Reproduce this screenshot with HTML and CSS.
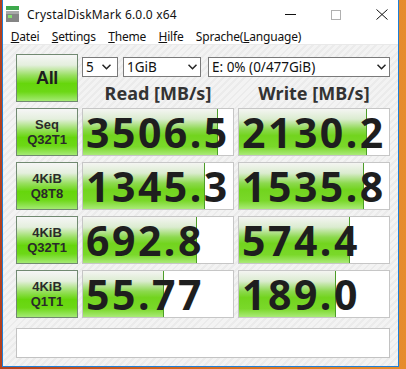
FILE: index.html
```html
<!DOCTYPE html>
<html lang="de">
<head>
  <meta charset="UTF-8">
  <title>CrystalDiskMark 6.0.0 x64</title>
  <link rel="stylesheet" href="styles.css">
</head>
<body>
  <div class="window">
    <div class="titlebar">
      <svg class="app-icon" width="13" height="16" viewBox="0 0 13 16">
        <rect x="0" y="0" width="13" height="4" fill="#3da94c"/>
        <rect x="0" y="5" width="13" height="11" fill="#858585"/>
        <rect x="0" y="5" width="13" height="3" fill="#a9a9a9"/>
        <rect x="2" y="9" width="4" height="3" fill="#86e06e"/>
      </svg>
      <span class="title">CrystalDiskMark 6.0.0 x64</span>
      <div class="controls">
        <svg width="11" height="10" viewBox="0 0 11 10"><line x1="0" y1="4.5" x2="11" y2="4.5" stroke="#111"/></svg>
        <svg width="10" height="10" viewBox="0 0 10 10"><rect x="0.5" y="0.5" width="9" height="9" fill="none" stroke="#b0b0b0"/></svg>
        <svg width="12" height="11" viewBox="0 0 12 11"><path d="M0.5 0.5 L11.5 10.5 M11.5 0.5 L0.5 10.5" stroke="#111" fill="none"/></svg>
      </div>
    </div>

    <div class="menubar">
      <span><u>D</u>atei</span>
      <span><u>S</u>ettings</span>
      <span><u>T</u>heme</span>
      <span><u>H</u>ilfe</span>
      <span>Sprache(<u>L</u>anguage)</span>
    </div>

    <div class="content">
      <div class="grid">
        <div class="btn btn-all">All</div>
        <div class="top">
          <div class="selects">
            <div class="sel sel-n"><span>5</span>
              <svg width="9" height="6" viewBox="0 0 9 6"><polyline points="0.5,0.8 4.5,4.8 8.5,0.8" fill="none" stroke="#222" stroke-width="1.5"/></svg>
            </div>
            <div class="sel sel-s"><span>1GiB</span>
              <svg width="9" height="6" viewBox="0 0 9 6"><polyline points="0.5,0.8 4.5,4.8 8.5,0.8" fill="none" stroke="#222" stroke-width="1.5"/></svg>
            </div>
            <div class="sel sel-d"><span>E: 0% (0/477GiB)</span>
              <svg width="9" height="6" viewBox="0 0 9 6"><polyline points="0.5,0.8 4.5,4.8 8.5,0.8" fill="none" stroke="#222" stroke-width="1.5"/></svg>
            </div>
          </div>
          <div class="heads">
            <div>Read [MB/s]</div>
            <div>Write [MB/s]</div>
          </div>
        </div>

        <div class="btn"><span>Seq</span><span>Q32T1</span></div>
        <div class="val" style="--w:135px">3506.5</div>
        <div class="val" style="--w:128px">2130.2</div>

        <div class="btn"><span>4KiB</span><span>Q8T8</span></div>
        <div class="val" style="--w:122px">1345.3</div>
        <div class="val" style="--w:125px">1535.8</div>

        <div class="btn"><span>4KiB</span><span>Q32T1</span></div>
        <div class="val" style="--w:114px">692.8</div>
        <div class="val" style="--w:111px">574.4</div>

        <div class="btn"><span>4KiB</span><span>Q1T1</span></div>
        <div class="val" style="--w:81px">55.77</div>
        <div class="val" style="--w:97px">189.0</div>
      </div>
      <div class="comment"></div>
    </div>
  </div>
</body>
</html>
```

FILE: styles.css
```css
body {
  margin: 0;
  height: 369px;
  overflow: hidden;
  background: linear-gradient(to right, #b2401e, #d2661f 40%, #e68c2c);
  font-family: 'Noto Sans', sans-serif;
  color: #111;
}
.window {
  box-sizing: border-box;
  margin-left: 2px;
  width: 397px;
  height: 367px;
  border: 1px solid #1f7fd6;
  border-top: none;
  background: #fff;
  display: flex;
  flex-direction: column;
  overflow: hidden;
}
.titlebar {
  height: 29px;
  display: flex;
  align-items: center;
  padding-left: 3px;
}
.app-icon {
  margin-top: -2px;
}
.title {
  margin-left: 8px;
  font-size: 12px;
  letter-spacing: 0.2px;
}
.controls {
  margin-left: auto;
  padding-right: 10px;
  display: flex;
  align-items: center;
  gap: 35px;
}
.menubar {
  height: 15px;
  line-height: 15px;
  font-size: 12px;
  letter-spacing: -0.2px;
  display: flex;
  padding-left: 1.5px;
  border-bottom: 1px solid #e9e9e9;
}
.menubar span {
  padding: 0 6.2px;
}
.menubar u {
  text-underline-offset: 1px;
}
.content {
  flex: 1;
  padding: 9px 0 0 13px;
  background: repeating-linear-gradient(135deg, #f3f3f3 0 3px, #ebebeb 3px 5px);
}
.grid {
  display: grid;
  grid-template-columns: 62px 152px 152px;
  grid-auto-rows: 48px;
  column-gap: 4px;
  row-gap: 6px;
}
.btn {
  box-sizing: border-box;
  border: 1px solid #718971;
  background: linear-gradient(to bottom, #f6f6f6 0%, #e4efdd 22%, #96df5c 45%, #66d60c 62%, #6cd816 80%, #a4ea74 100%);
  display: flex;
  flex-direction: column;
  align-items: center;
  justify-content: center;
  font-family: 'Liberation Sans', sans-serif;
  font-size: 13px;
  font-weight: bold;
  line-height: 15px;
  color: #2a2a2a;
}
.btn-all {
  font-size: 18px;
  line-height: 20px;
  letter-spacing: -0.3px;
  color: #1e1e1e;
}
.top {
  grid-column: 2 / span 2;
}
.selects {
  display: flex;
  margin-top: 3px;
  height: 20px;
}
.sel {
  box-sizing: border-box;
  height: 20px;
  border: 1px solid #7a7a7a;
  background: #fff;
  display: flex;
  align-items: center;
  justify-content: space-between;
  padding: 0 3px 0 3px;
  font-size: 13.5px;
  color: #111;
}
.sel-n {
  width: 36px;
  margin-right: 5px;
  padding-right: 6px;
}
.sel-s {
  width: 78px;
  margin-right: 7px;
}
.sel-d {
  width: 182px;
}
.heads {
  display: grid;
  grid-template-columns: 152px 152px;
  column-gap: 4px;
  margin-top: 5px;
  text-align: center;
  font-size: 18px;
  font-weight: bold;
  line-height: 22px;
  color: #333;
}
.val {
  box-sizing: border-box;
  border: 1px solid #c6c6c6;
  background-color: #fff;
  background-image:
    linear-gradient(to left, #4c9c28 1px, transparent 1px),
    linear-gradient(to bottom, #f4f5f2 0%, #dbecd0 22%, #8cd94e 44%, #72d41e 58%, #7ad82a 82%, #aaea78 100%);
  background-size: var(--w) 100%;
  background-repeat: no-repeat;
  padding-left: 3px;
  font-size: 41px;
  font-weight: bold;
  line-height: 46px;
  letter-spacing: 2.5px;
  white-space: nowrap;
  color: #1e1e1e;
}
.comment {
  box-sizing: border-box;
  margin-top: 10px;
  width: 374px;
  height: 30px;
  border: 1px solid #c2c2c2;
  background: #fff;
}
```
